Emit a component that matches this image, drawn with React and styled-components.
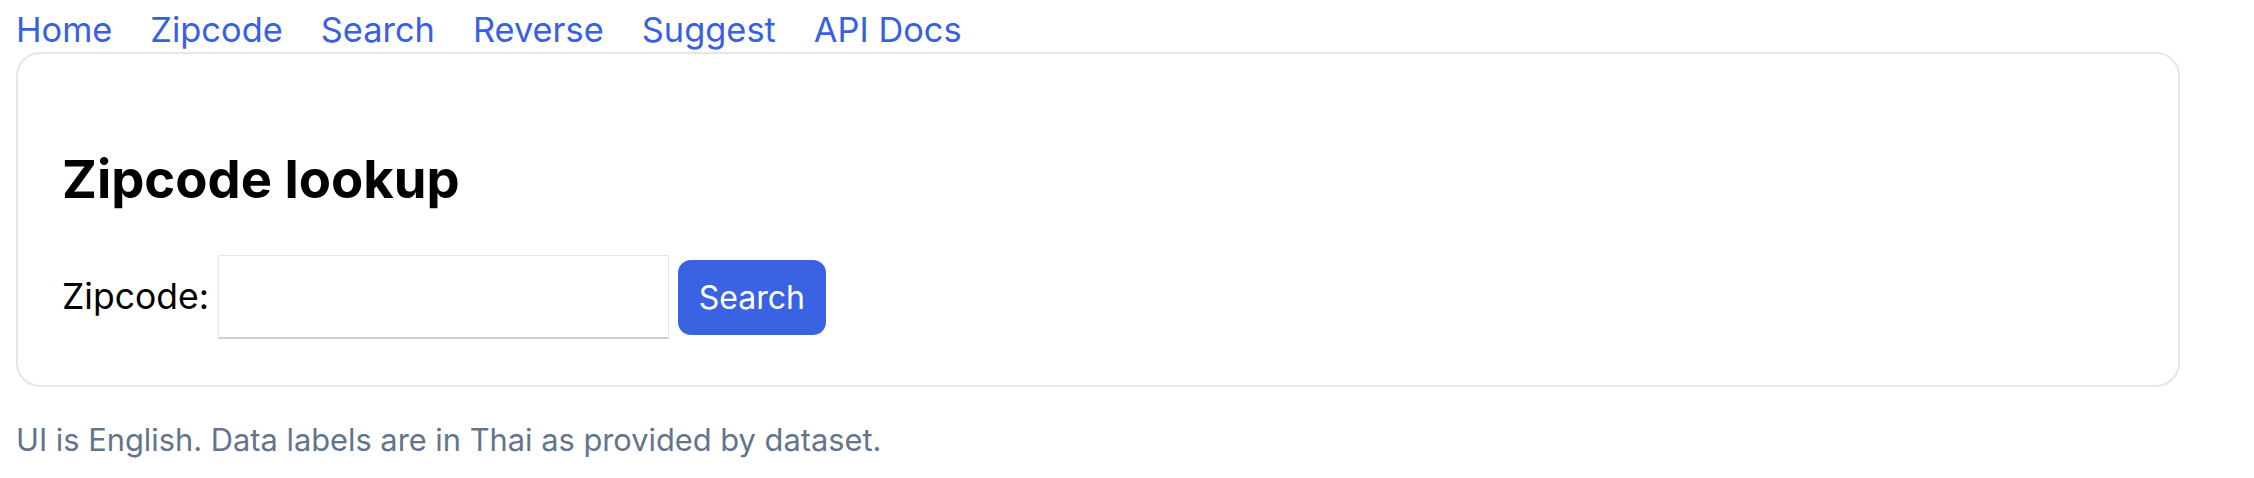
import React from "react";
import styled, { createGlobalStyle } from "styled-components";

const Global = createGlobalStyle`
  html, body { margin: 0; padding: 0; background: #ffffff; }
  body { font-family: Inter, "Noto Sans", sans-serif; color: #000; }
`;

const Page = styled.div`
  padding: 0 16px;
`;

const Nav = styled.nav`
  display: flex;
  gap: 38px;
  padding-top: 9px;
`;

const NavLink = styled.a`
  font-size: 34.4px;
  line-height: 41px;
  color: #3a60e2;
  text-decoration: none;
`;

const Card = styled.section`
  margin-top: 2px;
  max-width: 2164px;
  box-sizing: border-box;
  border: 2px solid #e5e5eb;
  border-radius: 24px;
  padding: 48px 44px 46px;
`;

const Title = styled.h2`
  margin: 45px 0 43px;
  font-size: 52.6px;
  line-height: 65px;
  font-weight: 700;
`;

const Form = styled.form`
  display: flex;
  align-items: center;
  gap: 9px;
`;

const Label = styled.label`
  font-size: 35.5px;
  line-height: 44px;
`;

const Input = styled.input`
  box-sizing: border-box;
  width: 451px;
  height: 84px;
  border: 1px solid #e6e6e6;
  border-bottom: 2px solid #cfcfcf;
  background: #fff;
  font-size: 32px;
  font-family: inherit;
  padding: 0 12px;
  outline: none;
`;

const Button = styled.button`
  box-sizing: border-box;
  height: 75px;
  width: 148px;
  border: none;
  border-radius: 13px;
  background: #3a63e4;
  color: #fff;
  font-family: inherit;
  font-size: 32px;
  cursor: pointer;
`;

const Note = styled.p`
  margin: 33px 0 0;
  font-size: 30.8px;
  line-height: 40px;
  color: #64748b;
`;

const links = ["Home", "Zipcode", "Search", "Reverse", "Suggest", "API Docs"];

export default function App() {
  return (
    <Page>
      <Global />
      <Nav>
        {links.map((l) => (
          <NavLink key={l} href="#">
            {l}
          </NavLink>
        ))}
      </Nav>
      <Card>
        <Title>Zipcode lookup</Title>
        <Form onSubmit={(e) => e.preventDefault()}>
          <Label htmlFor="zip">Zipcode:</Label>
          <Input id="zip" type="text" />
          <Button type="submit">Search</Button>
        </Form>
      </Card>
      <Note>UI is English. Data labels are in Thai as provided by dataset.</Note>
    </Page>
  );
}
